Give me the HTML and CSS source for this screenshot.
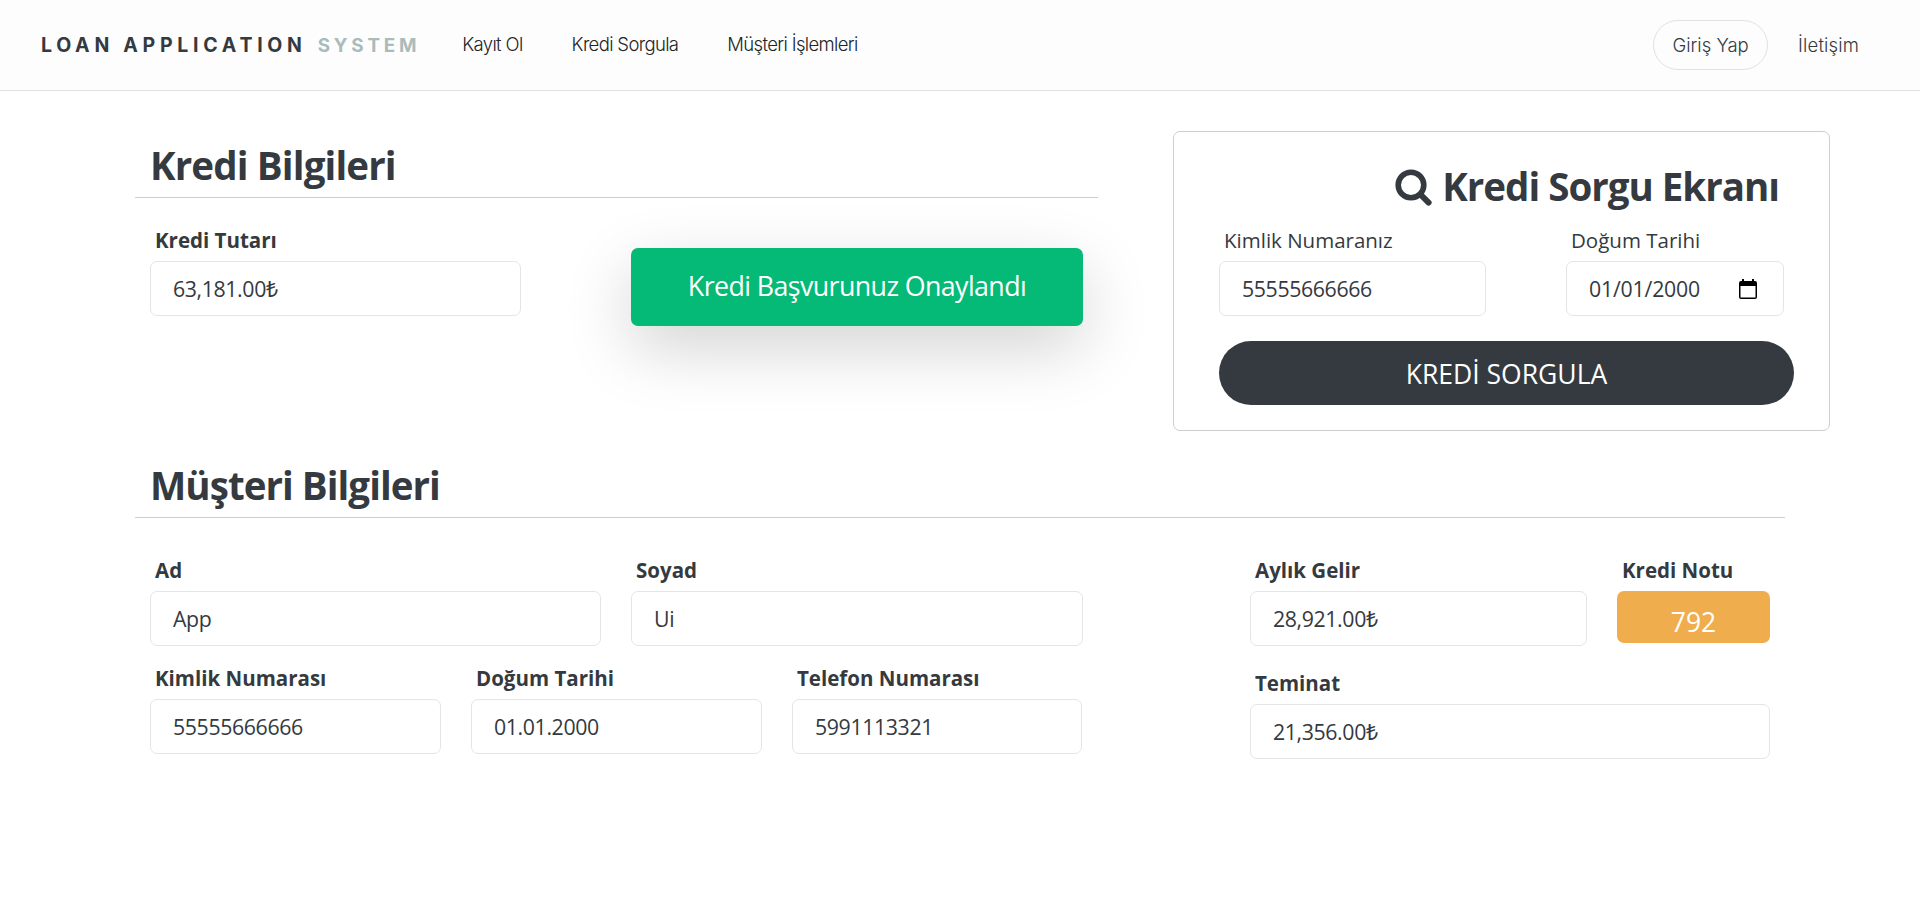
FILE: index.html
```
<!DOCTYPE html>
<html lang="tr">
<head>
<meta charset="utf-8">
<title>Loan Application System</title>
<link rel="stylesheet" href="styles.css">
</head>
<body>
<header class="navbar">
  <a class="brand"><span class="brand-main">LOAN APPLICATION</span><span class="brand-accent">SYSTEM</span></a>
  <nav class="links">
    <a>Kayıt Ol</a>
    <a>Kredi Sorgula</a>
    <a>Müşteri İşlemleri</a>
  </nav>
  <div class="actions">
    <a class="login">Giriş Yap</a>
    <a class="contact">İletişim</a>
  </div>
</header>
<main>
  <div class="top">
    <section class="loan">
      <h2>Kredi Bilgileri</h2>
      <div class="loan-row">
        <div class="field amount"><label>Kredi Tutarı</label><div class="input">63,181.00₺</div></div>
        <div class="approved">Kredi Başvurunuz Onaylandı</div>
      </div>
    </section>
    <section class="card">
      <h2 class="card-title">
        <svg class="search" viewBox="0 0 37 38"><circle cx="16" cy="16" r="12.8" fill="none" stroke="currentColor" stroke-width="5.6"/><path d="M25.5 25.5 33.6 33.6" stroke="currentColor" stroke-width="6" stroke-linecap="round"/></svg>
        <span>Kredi Sorgu Ekranı</span>
      </h2>
      <div class="query-row">
        <div class="field light id"><label>Kimlik Numaranız</label><div class="input">55555666666</div></div>
        <div class="field light birth"><label>Doğum Tarihi</label><div class="input"><span>01/01/2000</span>
          <svg class="calendar" viewBox="0 0 18 20"><path d="M2 2h1V0h2v2h8V0h2v2h1a2 2 0 0 1 2 2v14a2 2 0 0 1-2 2H2a2 2 0 0 1-2-2V4a2 2 0 0 1 2-2zm-.5 5v11.5h15V7z" fill="#000" fill-rule="evenodd"/></svg></div></div>
      </div>
      <button class="submit">KREDİ SORGULA</button>
    </section>
  </div>
  <section class="customer">
    <h2>Müşteri Bilgileri</h2>
    <div class="customer-row">
      <div class="identity">
        <div class="pair">
          <div class="field"><label>Ad</label><div class="input">App</div></div>
          <div class="field"><label>Soyad</label><div class="input">Ui</div></div>
        </div>
        <div class="triple">
          <div class="field"><label>Kimlik Numarası</label><div class="input">55555666666</div></div>
          <div class="field"><label>Doğum Tarihi</label><div class="input">01.01.2000</div></div>
          <div class="field"><label>Telefon Numarası</label><div class="input">5991113321</div></div>
        </div>
      </div>
      <div class="finance">
        <div class="income-row">
          <div class="field income"><label>Aylık Gelir</label><div class="input">28,921.00₺</div></div>
          <div class="field score"><label>Kredi Notu</label><div class="badge">792</div></div>
        </div>
        <div class="field"><label>Teminat</label><div class="input">21,356.00₺</div></div>
      </div>
    </div>
  </section>
</main>
</body>
</html>
```
FILE: styles.css
```
* { box-sizing: border-box; }
body {
  margin: 0;
  background: #fff;
  color: #343a40;
  font-family: "Open Sans", "Noto Sans", sans-serif;
}
h2 { margin: 0; font-weight: 700; }

.navbar {
  width: 1920px;
  height: 91px;
  padding: 0 61px 0 41px;
  display: flex;
  align-items: center;
  background: #fdfdfd;
  border-bottom: 1px solid #dee0e1;
  font-family: Inter, sans-serif;
}
.brand {
  display: flex;
  align-items: baseline;
  gap: 11px;
  font-size: 19.5px;
  font-weight: 700;
  letter-spacing: 4.72px;
}
.brand-accent {
  color: #a9bbbb;
  font-size: 18.8px;
  letter-spacing: 3.8px;
}
.links {
  display: flex;
  gap: 49px;
  margin-left: 42px;
  padding-bottom: 2px;
  color: #212529;
  font-size: 18.5px;
  font-weight: 300;
  letter-spacing: -0.65px;
}
.actions {
  display: flex;
  align-items: center;
  gap: 30px;
  margin-left: auto;
  font-size: 18.5px;
  font-weight: 300;
}
.login {
  width: 115px;
  height: 50px;
  display: flex;
  align-items: center;
  justify-content: center;
  border: 1px solid #dfe1e2;
  border-radius: 25px;
}
.contact { letter-spacing: 0.15px; }

main { padding: 40px 0 0 135px; }
.top { display: flex; gap: 75px; height: 320px; }
.loan { width: 963px; padding-top: 3px; }
.loan > h2, .customer > h2 {
  height: 64px;
  padding-left: 15px;
  border-bottom: 1px solid #ccced0;
  font-size: 38.5px;
  letter-spacing: -0.95px;
  line-height: 63px;
}
.loan > h2 { letter-spacing: -0.85px; }
.loan-row {
  display: flex;
  justify-content: space-between;
  align-items: flex-start;
  padding: 26px 15px 0;
}
.field label {
  display: block;
  height: 37px;
  padding-left: 5px;
  font-size: 20.5px;
  font-weight: 700;
  line-height: 33px;
}
.light label { font-weight: 400; }
.input {
  height: 55px;
  padding: 0 22px;
  display: flex;
  align-items: center;
  background: #fff;
  border: 1px solid #e5e5e6;
  border-radius: 7px;
  font-size: 21.3px;
  letter-spacing: -0.38px;
}
.amount { width: 371px; }
.approved {
  width: 452px;
  height: 78px;
  margin-top: 24px;
  padding-bottom: 3px;
  display: flex;
  align-items: center;
  justify-content: center;
  background: #05b976;
  border-radius: 7px;
  box-shadow: 0 22px 66px rgba(0, 0, 0, 0.175);
  color: #fff;
  font-size: 26.8px;
  letter-spacing: -0.6px;
}

.card {
  width: 657px;
  height: 300px;
  padding: 26px 35px 0 45px;
  border: 1px solid #ccced0;
  border-radius: 7px;
}
.card-title {
  display: flex;
  justify-content: flex-end;
  align-items: center;
  gap: 10px;
  height: 56px;
  padding-right: 15px;
  font-size: 38.5px;
  letter-spacing: -1px;
}
.search { width: 37px; height: 38px; margin-top: 4px; }
.query-row { display: flex; justify-content: space-between; padding: 10px 10px 0 0; }
.id { width: 267px; }
.birth { width: 218px; }
.birth .input { justify-content: space-between; padding-right: 26px; letter-spacing: -0.2px; }
.calendar { width: 18px; height: 20px; }
.submit {
  width: 575px;
  height: 64px;
  margin-top: 25px;
  padding: 2px 0 0;
  border: 0;
  border-radius: 32px;
  background: #343a40;
  color: #fff;
  font-family: inherit;
  font-size: 26.5px;
}

.customer { width: 1650px; padding-top: 3px; }
.customer-row { display: flex; justify-content: space-between; padding: 36px 15px 0; }
.identity { width: 933px; }
.pair, .triple { display: grid; grid-template-columns: 451px 452px; column-gap: 30px; }
.triple { grid-template-columns: 291px 291px 290px; margin-top: 16px; }
.finance { width: 520px; }
.income-row { display: flex; justify-content: space-between; margin-bottom: 21px; }
.income { width: 337px; }
.score { width: 153px; }
.badge {
  height: 52px;
  padding-top: 9px;
  display: flex;
  align-items: center;
  justify-content: center;
  background: #f0ad4e;
  border-radius: 7px;
  color: #fff;
  font-size: 26.5px;
}
```
